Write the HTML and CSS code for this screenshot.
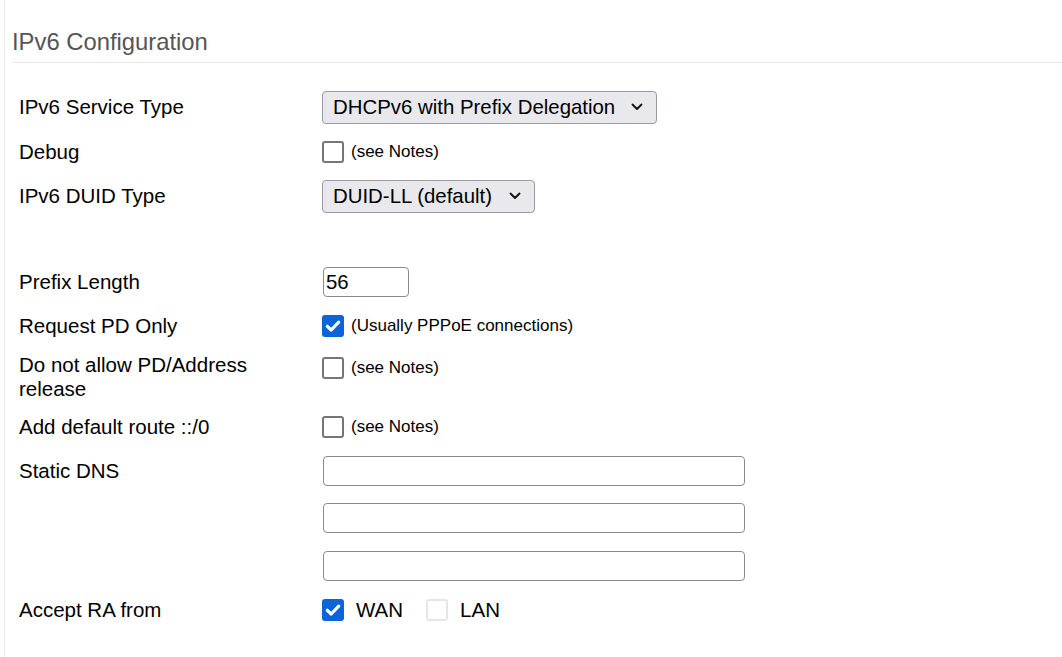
FILE: index.html
```html
<!DOCTYPE html>
<html>
<head>
<meta charset="utf-8">
<link rel="stylesheet" href="styles.css">
</head>
<body>
<div class="page">
  <h2 class="title">IPv6 Configuration</h2>
  <div class="form">
    <div class="row">
      <div class="label">IPv6 Service Type</div>
      <div class="value">
        <div class="select sel-wide"><span>DHCPv6 with Prefix Delegation</span>
          <svg class="chev" width="12" height="8" viewBox="0 0 12 8"><path d="M1.5 1.5 L6 6 L10.5 1.5" fill="none" stroke="#111" stroke-width="1.9" stroke-linecap="round" stroke-linejoin="round"/></svg>
        </div>
      </div>
    </div>
    <div class="row">
      <div class="label">Debug</div>
      <div class="value"><span class="cb"></span><span class="note">(see Notes)</span></div>
    </div>
    <div class="row">
      <div class="label">IPv6 DUID Type</div>
      <div class="value">
        <div class="select"><span>DUID-LL (default)</span>
          <svg class="chev" width="12" height="8" viewBox="0 0 12 8"><path d="M1.5 1.5 L6 6 L10.5 1.5" fill="none" stroke="#111" stroke-width="1.9" stroke-linecap="round" stroke-linejoin="round"/></svg>
        </div>
      </div>
    </div>
    <div class="spacer"></div>
    <div class="row">
      <div class="label">Prefix Length</div>
      <div class="value"><div class="input short">56</div></div>
    </div>
    <div class="row">
      <div class="label">Request PD Only</div>
      <div class="value"><span class="cb checked"><svg width="22" height="22" viewBox="0 0 22 22"><path d="M5.3 11.3 L9.2 15 L16.7 7.2" fill="none" stroke="#fff" stroke-width="3.2" stroke-linecap="round" stroke-linejoin="round"/></svg></span><span class="note">(Usually PPPoE connections)</span></div>
    </div>
    <div class="row row-tall">
      <div class="label">Do not allow PD/Address<br>release</div>
      <div class="value"><span class="cb"></span><span class="note">(see Notes)</span></div>
    </div>
    <div class="row">
      <div class="label">Add default route ::/0</div>
      <div class="value"><span class="cb"></span><span class="note">(see Notes)</span></div>
    </div>
    <div class="row row-dns">
      <div class="label">Static DNS</div>
      <div class="value dns">
        <div class="input wide"></div>
        <div class="input wide"></div>
        <div class="input wide"></div>
      </div>
    </div>
    <div class="row">
      <div class="label">Accept RA from</div>
      <div class="value ra">
        <span class="cb checked"><svg width="22" height="22" viewBox="0 0 22 22"><path d="M5.3 11.3 L9.2 15 L16.7 7.2" fill="none" stroke="#fff" stroke-width="3.2" stroke-linecap="round" stroke-linejoin="round"/></svg></span><span class="ra-text">WAN</span>
        <span class="cb light"></span><span class="ra-text">LAN</span>
      </div>
    </div>
  </div>
</div>
</body>
</html>
```

FILE: styles.css
```css
html, body {
  margin: 0;
  padding: 0;
  background: #fff;
}
body {
  font-family: "Liberation Sans", Arial, sans-serif;
  color: #000;
}
.page {
  margin-left: 4px;
  border-left: 1px solid #ececec;
  padding-left: 7px;
  min-height: 657px;
  box-sizing: border-box;
  padding-top: 29px;
}
.title {
  margin: 0;
  font-weight: normal;
  font-size: 23.8px;
  line-height: 26px;
  color: #555;
  padding-bottom: 7px;
  border-bottom: 1px solid #eaeaea;
}
.form {
  padding-left: 7px;
  margin-top: 22px;
}
.row {
  display: grid;
  grid-template-columns: 303px 1fr;
  align-items: center;
  min-height: 44.5px;
}
.label {
  font-size: 20.5px;
  line-height: 24px;
}
.value {
  display: flex;
  align-items: center;
}
.select {
  display: inline-flex;
  align-items: center;
  justify-content: space-between;
  box-sizing: border-box;
  height: 33px;
  padding: 0 13px 0 10px;
  background: #e9e9ed;
  border: 1px solid #9a9aa4;
  border-radius: 4px;
  font-size: 20.4px;
  white-space: nowrap;
  gap: 17px;
}
.sel-wide {
  width: 335px;
  gap: 6px;
}
.chev {
  display: block;
  flex: none;
}
.cb {
  display: inline-block;
  box-sizing: border-box;
  width: 22px;
  height: 22px;
  border: 2px solid #767676;
  border-radius: 3px;
  background: #fff;
  margin-right: 7px;
  flex: none;
}
.cb.checked {
  border: none;
  background: #0b64d8;
}
.cb.checked svg {
  display: block;
}
.cb.light {
  border: 2px solid #e6e6e6;
  border-radius: 3px;
}
.note {
  font-size: 17px;
}
.spacer {
  height: 41px;
}
.input {
  box-sizing: border-box;
  height: 30px;
  border: 1px solid #8a8a8a;
  border-radius: 4px;
  background: #fff;
  font-size: 20.4px;
  line-height: 28px;
  padding-left: 2px;
  margin-left: 1px;
}
.short {
  width: 86px;
}
.wide {
  width: 422px;
}
.row-tall {
  align-items: start;
  min-height: 56.5px;
}
.row-tall .label {
  padding-top: 4px;
}
.row-tall .value {
  padding-top: 8px;
}
.row-dns {
  align-items: start;
  padding-bottom: 7px;
}
.row-dns .label {
  padding-top: 9px;
}
.dns {
  flex-direction: column;
  align-items: flex-start;
  gap: 17.5px;
  padding-top: 6px;
}
.ra .cb {
  margin-right: 12px;
}
.ra-text {
  font-size: 20.5px;
  margin-right: 23px;
}
```
